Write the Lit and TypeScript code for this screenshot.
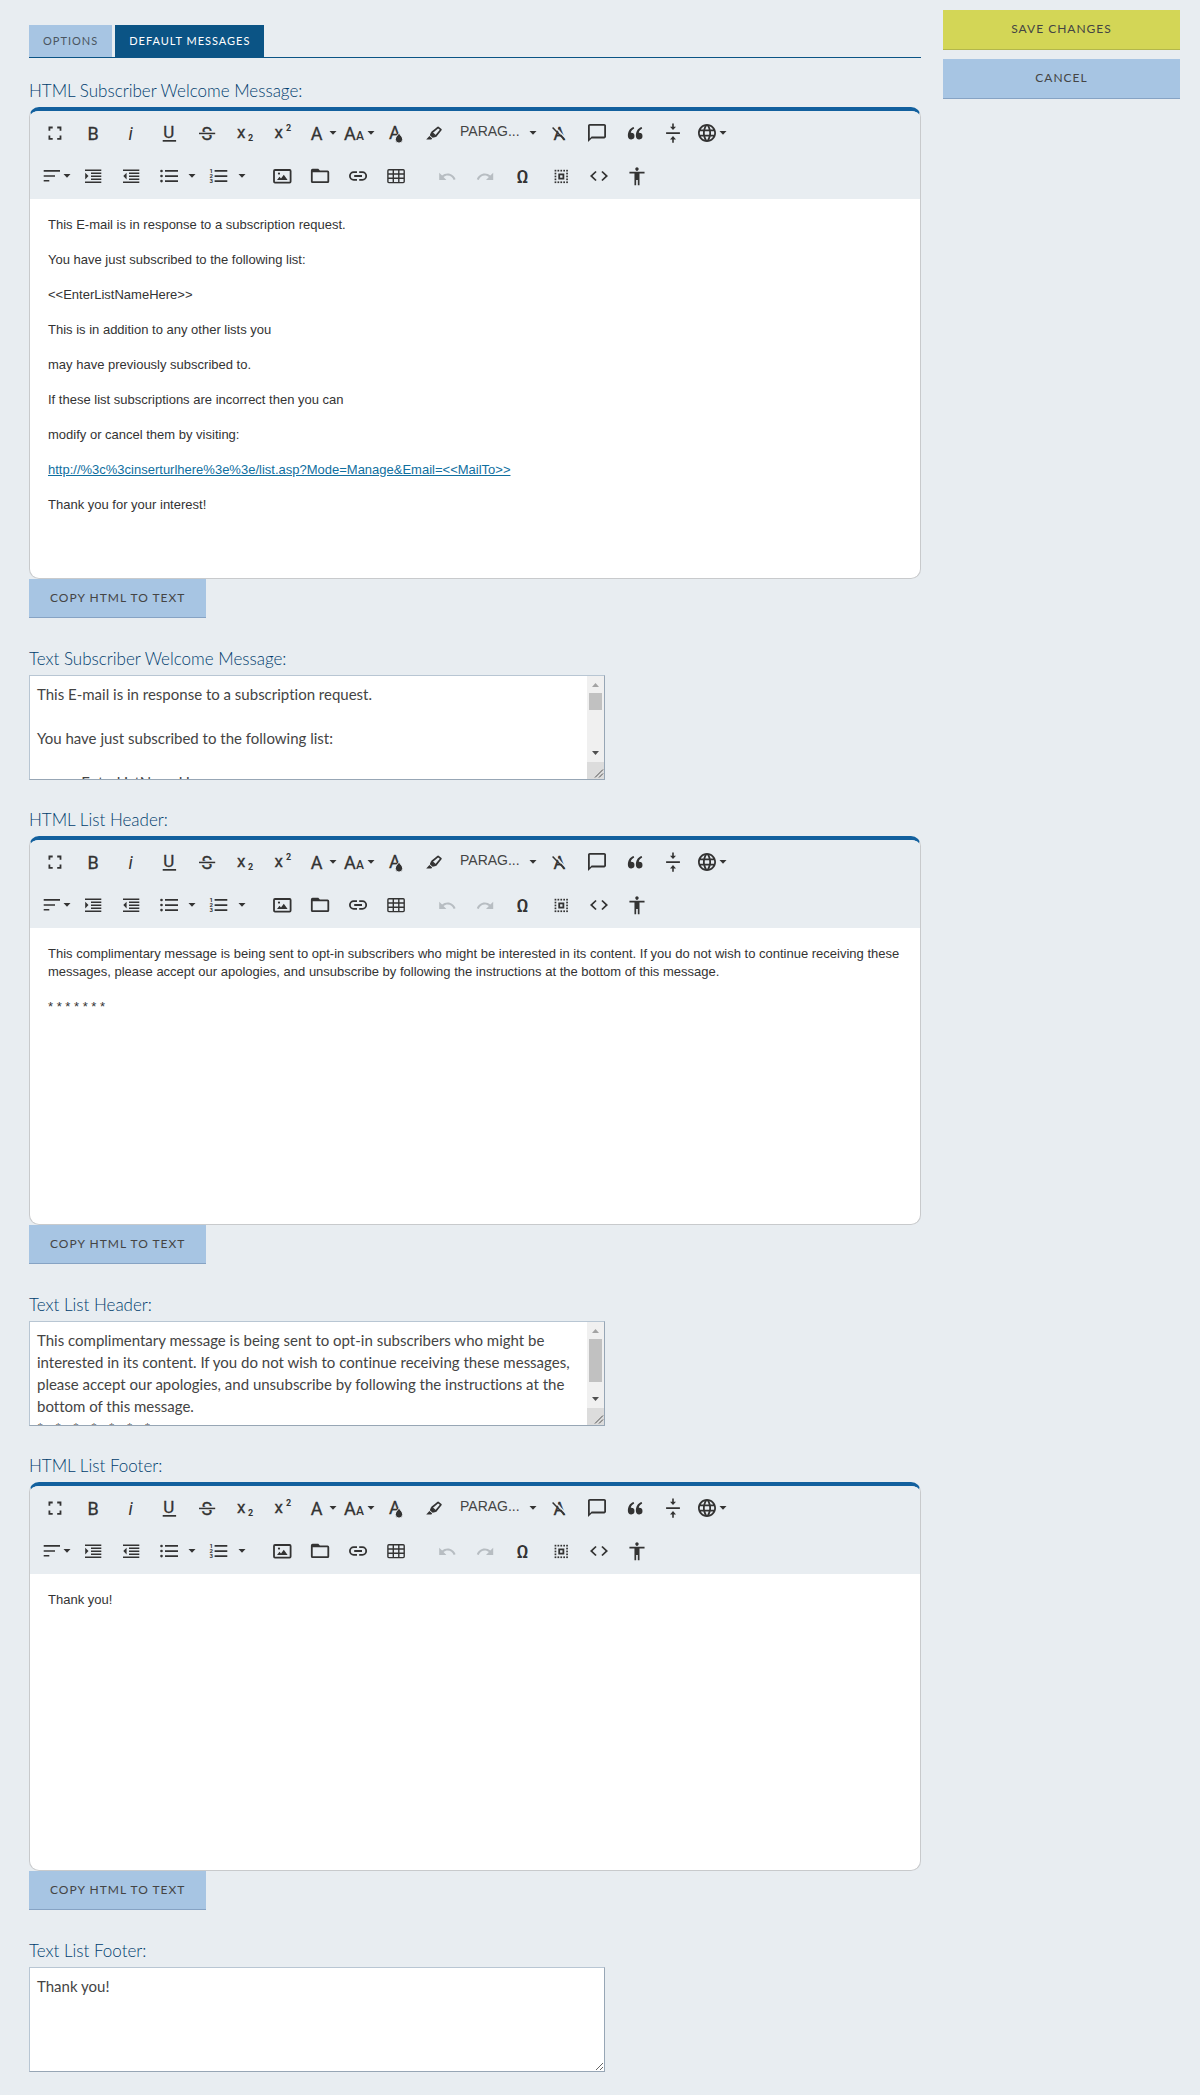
import { LitElement, html, css, svg, nothing, TemplateResult, SVGTemplateResult } from "lit";
import { customElement, property } from "lit/decorators.js";
import { classMap } from "lit/directives/class-map.js";
import { styleMap } from "lit/directives/style-map.js";

type Tool = {
  id: string;
  title: string;
  kind?: "plain" | "menu" | "split" | "select" | "gap";
  disabled?: boolean;
};

/* Dots on the edge of a five by five grid, three units apart. */
const DOTS = [0, 1, 2, 3, 4].flatMap((r) =>
  [0, 1, 2, 3, 4].filter((c) => r % 4 === 0 || c % 4 === 0).map((c) => [5.6 + c * 2.9, 5.8 + r * 2.9])
);

const ICONS: Record<string, SVGTemplateResult> = {
  fullscreen: svg`<path d="M7.3 14.5H5.5v4.2h4.2v-1.8H7.3zM5.5 9.8h1.8V7.4h2.4V5.6H5.5zM16.6 16.9h-2.4v1.8h4.2v-4.2h-1.8zM14.2 5.6v1.8h2.4v2.4h1.8V5.6z"/>`,
  bold: svg`<text class="g" x="6.400" y="18.6" font-size="18">B</text>`,
  italic: svg`<text class="g i" x="9.400" y="18.6" font-size="18">i</text>`,
  underline: svg`<text class="g" x="6.200" y="17.4" font-size="17">U</text><rect x="5.7" y="19" width="13.4" height="1.7"/>`,
  strike: svg`<text class="g" x="6.4" y="18.6" font-size="18">S</text><rect class="bg" x="4" y="10.9" width="16" height="3"/><rect x="4" y="11.7" width="16.2" height="1.5"/>`,
  sub: svg`<text class="g" x="4" y="16.6" font-size="17">x</text><text class="g b" x="15" y="20" font-size="9">2</text>`,
  sup: svg`<text class="g" x="3.4" y="16.6" font-size="17">x</text><text class="g b" x="15" y="10" font-size="9">2</text>`,
  family: svg`<text class="g" x="5.8" y="18.6" font-size="18">A</text>`,
  size: svg`<text class="g" x="1" y="18.6" font-size="18">A</text><text class="g m" x="13" y="18.6" font-size="12">A</text>`,
  color: svg`<text class="g" x="4" y="18.4" font-size="18">A</text><path stroke="#e8edf1" stroke-width="1" d="M14 12.2c1.800 2.300 3.700 4 3.700 6.200a3.700 3.700 0 0 1-7.400 0c0-2.200 1.900-3.900 3.700-6.200z"/>`,
  highlight: svg`<path d="M3.200 18.600l3.200-3.600 2.800 2.600-.9 1zM6.800 14.300l1.200-3 4.800 4.600-3.200.9z"/><path fill="none" stroke="#333" stroke-width="1.700" stroke-linejoin="round" d="M8.900 11.500l6.200-5.200 2.800 2.400-5.200 6.400z"/>`,
  clear: svg`<text class="g" x="6.400" y="18.600" font-size="18">A</text><path stroke="#e8edf1" stroke-width="1.400" d="M7.800 5.800L18 16.600"/><path stroke="#333" stroke-width="1.500" d="M5.600 6.600L17.400 18.800"/>`,
  comment: svg`<path transform="translate(1.200 1.200) scale(.9)" d="M20 2H4c-1.100 0-2 .9-2 2v18l4-4h14c1.100 0 2-.9 2-2V4c0-1.100-.9-2-2-2zm0 14H6l-2 2V4h16v12z"/>`,
  quote: svg`<path d="M8.200 11.800a3.300 3.300 0 1 1-3.300 3.500C4.700 10.800 6.600 7.400 10.600 6l.6 1.500C9 8.600 8 10 7.800 11.800zM16.200 11.800a3.300 3.300 0 1 1-3.300 3.500C12.700 10.800 14.600 7.400 18.600 6l.6 1.500C17 8.600 16 10 15.800 11.800z"/>`,
  rule: svg`<path d="M5.100 11.200h13.800v1.800H5.100zM11.200 2.500h1.600v3.200h2.200L12 9.100 9 5.700h2.200zM11.200 21.700h1.600v-3.200h2.200L12 15.100l-3 3.400h2.200z"/>`,
  globe: svg`<path transform="translate(1.200 1.200) scale(.9)" d="M11.990 2C6.470 2 2 6.480 2 12s4.470 10 9.990 10C17.520 22 22 17.520 22 12S17.520 2 11.990 2zm6.930 6h-2.950c-.32-1.250-.78-2.450-1.380-3.560 1.840.63 3.370 1.910 4.330 3.560zM12 4.040c.83 1.200 1.480 2.530 1.910 3.960h-3.820c.43-1.430 1.080-2.760 1.910-3.960zM4.260 14C4.100 13.360 4 12.690 4 12s.1-1.360.26-2h3.380c-.08.66-.14 1.320-.14 2 0 .68.06 1.340.14 2H4.260zm.82 2h2.950c.32 1.250.78 2.450 1.380 3.560-1.840-.63-3.370-1.900-4.330-3.560zm2.950-8H5.080c.96-1.660 2.490-2.930 4.330-3.560C8.810 5.550 8.350 6.750 8.030 8zM12 19.960c-.83-1.200-1.480-2.530-1.910-3.960h3.820c-.43 1.430-1.080 2.760-1.910 3.960zM14.340 14H9.660c-.09-.66-.16-1.320-.16-2 0-.68.07-1.350.16-2h4.680c.09.65.16 1.320.16 2 0 .68-.07 1.340-.16 2zm.25 5.560c.6-1.110 1.060-2.310 1.380-3.560h2.950c-.96 1.650-2.490 2.930-4.330 3.560zM16.360 14c.08-.66.14-1.320.14-2 0-.68-.06-1.340-.14-2h3.380c.16.64.26 1.310.26 2s-.1 1.360-.26 2h-3.380z"/>`,
  align: svg`<path d="M4.700 6.100h16.300v1.600H4.700zM4.700 11.200H16v1.600H4.700zM4.700 16h5.600v1.600H4.700z"/>`,
  indent: svg`<path d="M4 5.400h16.300v1.500H4zM10 8.400h10.300v1.500H10zM10 11.400h10.300v1.500H10zM10 14.400h10.300v1.500H10zM4 17.400h16.300v1.500H4zM4.200 8.800v6.600L7.500 12z"/>`,
  outdent: svg`<path d="M4 5.400h16.300v1.500H4zM10 8.400h10.300v1.500H10zM10 11.400h10.300v1.500H10zM10 14.400h10.300v1.500H10zM4 17.400h16.300v1.500H4zM7.600 8.800v6.600L4.300 12z"/>`,
  bullets: svg`<path d="M8 6.100h13v1.700H8zM8 11.200h13v1.700H8zM8 16.300h13V18H8z"/><circle cx="4.500" cy="7" r="1.300"/><circle cx="4.500" cy="12" r="1.300"/><circle cx="4.500" cy="17.100" r="1.300"/>`,
  numbers: svg`<path d="M7.600 6.100h12.700v1.700H7.600zM7.600 11.200h12.700v1.700H7.600zM7.600 16.300h12.700V18H7.600z"/><text class="g b" x="2.600" y="8.800" font-size="6">1</text><text class="g b" x="2.600" y="14" font-size="6">2</text><text class="g b" x="2.600" y="19.200" font-size="6">3</text>`,
  image: svg`<rect x="4" y="6" width="16.600" height="12.600" rx="1" fill="none" stroke="#333" stroke-width="1.800"/><path d="M7 16l2.500-3.200 1.500 1.600 2.800-3.600L17.600 16z"/><circle cx="9" cy="9.600" r="1.100"/>`,
  folder: svg`<path fill-rule="evenodd" d="M4.500 4.800h5.800l1.600 1.800h7.700a1.600 1.600 0 0 1 1.600 1.600v9.200a1.600 1.600 0 0 1-1.600 1.600H4.500a1.600 1.600 0 0 1-1.600-1.600V6.400a1.600 1.600 0 0 1 1.600-1.600zM4.700 8.300v8.900h14.700V8.300z"/>`,
  link: svg`<path fill="none" stroke="#333" stroke-width="1.800" d="M11 8.200H7.700a3.800 3.800 0 0 0 0 7.600H11M13.200 8.200h3.200a3.800 3.800 0 0 1 0 7.600h-3.200M8.200 12h7.800"/>`,
  table: svg`<path fill="none" stroke="#333" stroke-width="1.400" d="M3.900 6.800q0-1 1-1h14.300q1 0 1 1v10.800q0 1-1 1H4.900q-1 0-1-1zM9.300 5.800v12.800M14.800 5.800v12.800M3.900 10h16.300M3.900 14.300h16.300"/>`,
  undo: svg`<path transform="translate(2.600 3.100) scale(.8)" d="M12.500 8c-2.650 0-5.050.99-6.900 2.600L2 7v9h9l-3.620-3.620c1.390-1.160 3.160-1.880 5.120-1.880 3.540 0 6.550 2.310 7.600 5.500l2.370-.78C21.080 11.030 17.150 8 12.500 8z"/>`,
  redo: svg`<path transform="translate(2.600 3.100) scale(.8)" d="M18.400 10.600C16.550 8.990 14.150 8 11.500 8c-4.650 0-8.580 3.030-9.960 7.220L3.900 16c1.050-3.190 4.050-5.500 7.600-5.500 1.950 0 3.730.72 5.120 1.880L13 16h9V7l-3.600 3.600z"/>`,
  omega: svg`<text class="g m" x="5.600" y="18.500" font-size="18">Ω</text>`,
  selectAll: svg`${DOTS.map(([x, y]) => svg`<rect x=${x} y=${y} width="1.700" height="1.700"/>`)}<rect x="10.200" y="10.400" width="4.200" height="4.200" fill="none" stroke="#333" stroke-width="1.800"/>`,
  code: svg`<path transform="translate(1.200 1.800) scale(.9 .85)" d="M9.400 16.600L4.800 12l4.600-4.600L8 6l-6 6 6 6 1.400-1.400zm5.200 0l4.600-4.600-4.600-4.600L16 6l6 6-6 6-1.400-1.400z"/>`,
  person: svg`<path transform="translate(1.900 1.500) scale(.84 .9)" d="M12 2c1.100 0 2 .9 2 2s-.9 2-2 2-2-.9-2-2 .9-2 2-2zm9 7h-6v13h-2v-6h-2v6H9V9H3V7h18v2z"/>`,
};

const ROW_ONE: Tool[] = [
  { id: "fullscreen", title: "Fullscreen" },
  { id: "bold", title: "Bold" },
  { id: "italic", title: "Italic" },
  { id: "underline", title: "Underline" },
  { id: "strike", title: "Strikethrough" },
  { id: "sub", title: "Subscript" },
  { id: "sup", title: "Superscript" },
  { id: "family", title: "Font Family", kind: "menu" },
  { id: "size", title: "Font Size", kind: "menu" },
  { id: "color", title: "Text Color" },
  { id: "highlight", title: "Background Color" },
  { id: "format", title: "Paragraph Format", kind: "select" },
  { id: "clear", title: "Clear Formatting" },
  { id: "comment", title: "Comment" },
  { id: "quote", title: "Quote" },
  { id: "rule", title: "Insert Horizontal Line" },
  { id: "globe", title: "Language", kind: "menu" },
];

const ROW_TWO: Tool[] = [
  { id: "align", title: "Align", kind: "menu" },
  { id: "indent", title: "Increase Indent" },
  { id: "outdent", title: "Decrease Indent" },
  { id: "bullets", title: "Unordered List", kind: "split" },
  { id: "numbers", title: "Ordered List", kind: "split" },
  { id: "gap1", title: "", kind: "gap" },
  { id: "image", title: "Insert Image" },
  { id: "folder", title: "File Manager" },
  { id: "link", title: "Insert Link" },
  { id: "table", title: "Insert Table" },
  { id: "gap2", title: "", kind: "gap" },
  { id: "undo", title: "Undo", disabled: true },
  { id: "redo", title: "Redo", disabled: true },
  { id: "omega", title: "Special Characters" },
  { id: "selectAll", title: "Select All" },
  { id: "code", title: "Code View" },
  { id: "person", title: "Accessibility" },
];

const arrow = html`<svg class="arrow" viewBox="0 0 8 4" aria-hidden="true"><path d="M.5 0h7L4 3.800z"/></svg>`;

const labelStyles = css`
  .label {
    display: block;
    font-size: 17px;
    font-weight: 300;
    line-height: 20px;
    color: #003d6e;
    margin-bottom: 6px;
    font-variant-ligatures: none;
  }
`;

@customElement("rich-editor")
export class RichEditor extends LitElement {
  @property() label = "";
  @property({ attribute: false }) content: TemplateResult | typeof nothing = nothing;

  static styles = [
    labelStyles,
    css`
      :host { display: block; }
      .editor {
        border: 1px solid #c8cacc;
        border-top: 4px solid #12609e;
        border-radius: 10px;
        overflow: hidden;
        background: #fff;
      }
      .toolbar {
        display: flex;
        flex-direction: column;
        gap: 3px;
        padding: 2px 6px 3px;
        background: #e8edf1;
      }
      .row { display: flex; height: 40px; }
      .tool, .caret {
        display: flex;
        align-items: center;
        justify-content: center;
        flex: none;
        width: 38px;
        margin: 0;
        padding: 0;
        border: 0;
        background: none;
        color: #333;
        cursor: pointer;
      }
      .tool:hover, .caret:hover { background: #d9e2ea; }
      .menu { justify-content: flex-start; padding-left: 3px; }
      .caret { width: 12px; justify-content: flex-start; }
      .gap { flex: none; width: 13px; }
      .icon { width: 24px; height: 24px; flex: none; fill: #333; }
      .arrow { width: 8px; height: 4px; flex: none; fill: #333; }
      .tool:disabled .icon { fill: #b7bdc2; }
      .g { font-family: Roboto, sans-serif; font-weight: 400; fill: #333; stroke: #333; stroke-width: 0.3px; }
      .m { font-weight: 500; stroke: none; }
      .b { font-weight: 700; stroke: none; }
      .i { font-style: italic; stroke: none; }
      .bg { fill: #e8edf1; }
      .format { display: flex; align-items: center; width: 86px; flex: none; }
      .select {
        appearance: none;
        width: 75px;
        height: 40px;
        margin: 0;
        padding: 0 0 4px 6px;
        border: 0;
        background: none;
        font: 14px/20px "Liberation Sans", Arial, sans-serif;
        color: #444;
      }
      .body {
        min-height: 267px;
        padding: 17px 18px 12px;
        font: 13px/18px "Liberation Sans", Arial, sans-serif;
        color: #333;
        outline: none;
      }
      .body p { margin: 0 0 17px; }
      .body a { color: #0f6f9f; }
    `,
  ];

  private icon(id: string) {
    return html`<svg class="icon" viewBox="0 0 24 24" aria-hidden="true">${ICONS[id]}</svg>`;
  }

  private tool(t: Tool) {
    switch (t.kind) {
      case "gap":
        return html`<span class="gap"></span>`;
      case "select":
        return html`<span class="format">
          <select class="select" aria-label=${t.title}><option>PARAG...</option></select>${arrow}
        </span>`;
      case "split":
        return html`<button class="tool" type="button" aria-label=${t.title}>${this.icon(t.id)}</button
          ><button class="caret" type="button" aria-label="${t.title} options">${arrow}</button>`;
      default:
        return html`<button
          class=${classMap({ tool: true, menu: t.kind === "menu" })}
          type="button"
          aria-label=${t.title}
          ?disabled=${t.disabled}
        >${this.icon(t.id)}${t.kind === "menu" ? arrow : nothing}</button>`;
    }
  }

  render() {
    return html`
      <span class="label" id="label">${this.label}</span>
      <div class="editor">
        <div class="toolbar" role="toolbar">
          <div class="row">${ROW_ONE.map((t) => this.tool(t))}</div>
          <div class="row">${ROW_TWO.map((t) => this.tool(t))}</div>
        </div>
        <div class="body" contenteditable="true" role="textbox" aria-multiline="true" aria-labelledby="label" spellcheck="false">${this.content}</div>
      </div>
    `;
  }
}

type Section = {
  id: string;
  htmlLabel: string;
  textLabel: string;
  content: TemplateResult;
  text: string;
  /* Thumb height of the scroll bar in pixels; absent when the text fits. */
  thumb?: number;
};

const SECTIONS: Section[] = [
  {
    id: "welcome",
    thumb: 17,
    htmlLabel: "HTML Subscriber Welcome Message:",
    textLabel: "Text Subscriber Welcome Message:",
    content: html`<p>This E-mail is in response to a subscription request.</p>
      <p>You have just subscribed to the following list:</p>
      <p>&lt;&lt;EnterListNameHere&gt;&gt;</p>
      <p>This is in addition to any other lists you</p>
      <p>may have previously subscribed to.</p>
      <p>If these list subscriptions are incorrect then you can</p>
      <p>modify or cancel them by visiting:</p>
      <p><a href="#manage">http://%3c%3cinserturlhere%3e%3e/list.asp?Mode=Manage&amp;Email=&lt;&lt;MailTo&gt;&gt;</a></p>
      <p>Thank you for your interest!</p>
      <p><br /></p>`,
    text: `This E-mail is in response to a subscription request.

You have just subscribed to the following list:

       <<EnterListNameHere>>

This is in addition to any other lists you
may have previously subscribed to.

If these list subscriptions are incorrect then you can
modify or cancel them by visiting:

http://%3c%3cinserturlhere%3e%3e/list.asp?Mode=Manage&Email=<<MailTo>>

Thank you for your interest!`,
  },
  {
    id: "header",
    thumb: 43,
    htmlLabel: "HTML List Header:",
    textLabel: "Text List Header:",
    content: html`<p>This complimentary message is being sent to opt-in subscribers who might be interested in its content. If you do not wish to continue receiving these messages, please accept our apologies, and unsubscribe by following the instructions at the bottom of this message.</p>
      <p>* * * * * * *</p>`,
    text: `This complimentary message is being sent to opt-in subscribers who might be interested in its content. If you do not wish to continue receiving these messages, please accept our apologies, and unsubscribe by following the instructions at the bottom of this message.
*   *   *   *   *   *   *`,
  },
  {
    id: "footer",
    htmlLabel: "HTML List Footer:",
    textLabel: "Text List Footer:",
    content: html`<p>Thank you!</p>`,
    text: "Thank you!",
  },
];

@customElement("app-root")
export class AppRoot extends LitElement {
  static styles = [
    labelStyles,
    css`
      :host {
        display: block;
        background: #e8edf1;
        font-family: Lato, "Open Sans", sans-serif;
        color: #333;
      }
      * { box-sizing: border-box; }
      .page {
        display: grid;
        grid-template-columns: minmax(0, 1fr) 237px;
        gap: 22px;
        align-items: start;
        padding: 10px 20px 23px 29px;
      }
      .tabs {
        display: flex;
        gap: 3px;
        margin: 15px 0 23px;
        border-bottom: 1px solid #0b5485;
      }
      .tab {
        padding: 0 14px;
        font-size: 11px;
        line-height: 32px;
        letter-spacing: 1px;
        text-transform: uppercase;
        text-decoration: none;
        background: #a7c5e3;
        color: #4a5560;
      }
      .current { background: #0b5485; color: #fff; }
      .section { margin-bottom: 30px; }
      .section:last-child { margin-bottom: 0; }
      .side { display: grid; gap: 9px; }
      .button {
        display: block;
        height: 40px;
        margin: 0;
        padding: 0 21px 2px;
        border: 0;
        border-bottom: 1px solid #86a3c4;
        background: #a7c5e3;
        color: #444;
        font: 12px/16px Lato, "Open Sans", sans-serif;
        letter-spacing: 1px;
        text-transform: uppercase;
        cursor: pointer;
      }
      .save { background: #d3d656; border-bottom-color: #b3b74b; }
      .copy { height: 39px; margin-bottom: 31px; padding-bottom: 0; }
      .box {
        display: flex;
        width: 576px;
        max-width: 100%;
        height: 105px;
        border: 1px solid;
        border-color: #b8c6d3 #97a6b5 #97a6b5 #b8c6d3;
        background: #fff;
      }
      .text {
        flex: 1;
        min-width: 0;
        margin: 0;
        padding: 7px;
        border: 0;
        background: none;
        color: #444;
        font: 15px/22px Lato, "Open Sans", sans-serif;
        font-variant-ligatures: none;
        resize: none;
        outline: none;
        scrollbar-width: none;
      }
      .free { resize: both; max-width: 100%; }
      .bar {
        display: flex;
        flex-direction: column;
        flex: none;
        width: 17px;
        background: #f0f0f0;
      }
      .end { width: 17px; height: 17px; flex: none; }
      .track { flex: 1; padding: 0 2px; }
      .thumb { background: #c1c1c1; }
      .up { fill: #a3a3a3; }
      .down { fill: #505050; }
      .grip { background: #dcdcdc; stroke: #505050; fill: none; }
    `,
  ];

  private scrollBar(thumb: number) {
    return html`<div class="bar" aria-hidden="true">
      <svg class="end up" viewBox="0 0 17 17"><path d="M5 11h7L8.500 7z" /></svg>
      <div class="track"><div class="thumb" style=${styleMap({ height: `${thumb}px` })}></div></div>
      <svg class="end down" viewBox="0 0 17 17"><path d="M5 6h7L8.500 10z" /></svg>
      <svg class="end grip" viewBox="0 0 17 17"><path d="M8 15.500l8-8M12 15.500l4-4" /></svg>
    </div>`;
  }

  render() {
    return html`
      <div class="page">
        <main>
          <nav class="tabs">
            <a class="tab" href="#options">Options</a>
            <a class="tab current" href="#messages" aria-current="page">Default Messages</a>
          </nav>
          ${SECTIONS.map(
            (s) => html`<section class="section">
              <rich-editor .label=${s.htmlLabel} .content=${s.content}></rich-editor>
              <button class="button copy" type="button">Copy HTML to Text</button>
              <label class="label" for=${s.id}>${s.textLabel}</label>
              <div class="box">
                <textarea
                  class=${classMap({ text: true, free: !s.thumb })}
                  id=${s.id}
                  spellcheck="false"
                  .value=${s.text}
                ></textarea>
                ${s.thumb ? this.scrollBar(s.thumb) : nothing}
              </div>
            </section>`
          )}
        </main>
        <aside class="side">
          <button class="button save" type="button">Save Changes</button>
          <button class="button" type="button">Cancel</button>
        </aside>
      </div>
    `;
  }
}
